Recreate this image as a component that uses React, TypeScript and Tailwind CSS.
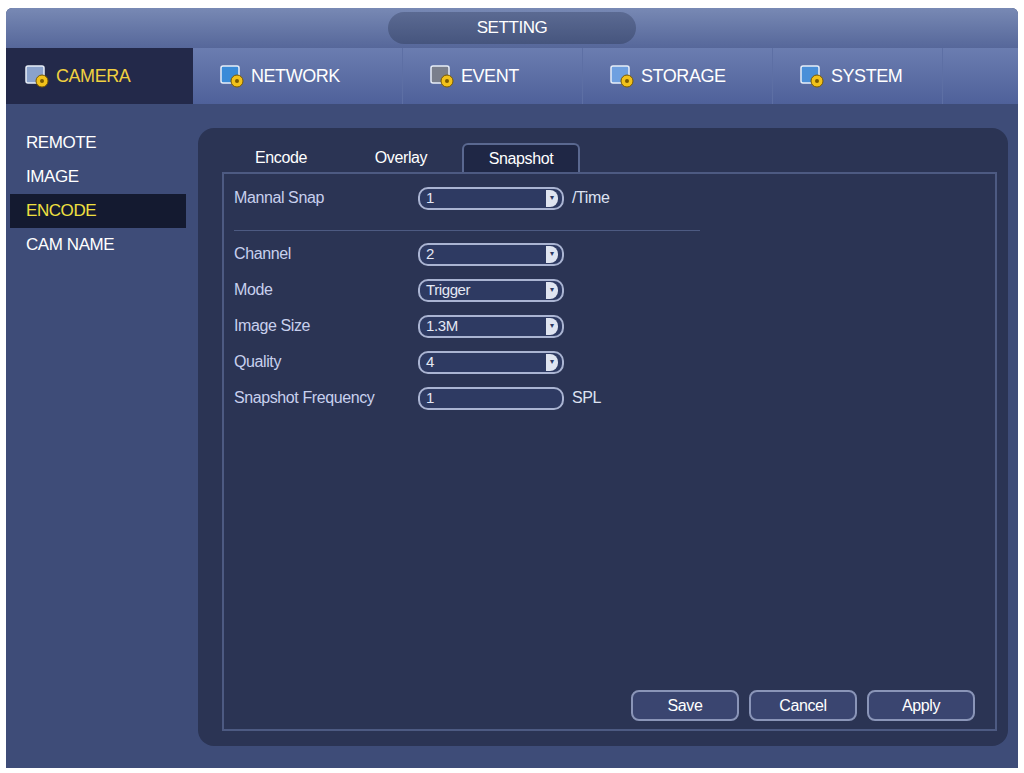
const font = { fontFamily: '"Liberation Sans", Arial, sans-serif' };

function TabIcon({ color }: { color: string }) {
  return (
    <svg width="30" height="26" viewBox="0 0 30 26">
      <rect x="4" y="3" width="18" height="17" rx="2" fill={color} stroke="#e8eef8" strokeWidth="1.5" />
      <circle cx="20" cy="18" r="6" fill="#f2c21b" stroke="#7a5a00" strokeWidth="1" />
      <circle cx="20" cy="18" r="2" fill="#7a5a00" />
    </svg>
  );
}

function Select({ value, arrow = true }: { value: string; arrow?: boolean }) {
  return (
    <div className="flex h-[23px] w-[146px] items-center justify-between rounded-[10px] border-2 border-[#aab4d2] bg-[#2e3a62] pl-1.5 pr-1 text-[15px] text-[#e4e8f4]">
      <span>{value}</span>
      {arrow ? (
        <span className="flex h-[17px] w-[12px] items-center justify-center rounded-r-[8px] bg-[#dfe4f0] text-[8px] text-[#2e3a62]">▾</span>
      ) : null}
    </div>
  );
}

const rows = [
  { label: "Channel", value: "2" },
  { label: "Mode", value: "Trigger" },
  { label: "Image Size", value: "1.3M" },
  { label: "Quality", value: "4" },
];

export default function App() {
  return (
    <div className="h-[773px] w-[1024px] bg-white px-[6px] pt-[8px]" style={font}>
      <div className="flex h-[760px] flex-col overflow-hidden rounded-t-md bg-[#3e4c78]">
        <div className="flex h-[40px] items-center justify-center bg-gradient-to-b from-[#7889b4] to-[#56679a]">
          <div className="flex h-[32px] w-[248px] items-center justify-center rounded-full bg-gradient-to-b from-[#5b6a92] to-[#46557e] text-[17px] tracking-tight text-white">SETTING</div>
        </div>
        <div className="flex h-[56px] bg-gradient-to-b from-[#6b7db0] to-[#4f619a]">
          <div className="flex w-[187px] items-center gap-1 bg-[#23294a] pl-4 text-[18px] tracking-tight text-[#f0d040]">
            <TabIcon color="#8aa2cc" />CAMERA
          </div>
          {[
            ["NETWORK", "#3a8bd8", 210],
            ["EVENT", "#7a7f8c", 180],
            ["STORAGE", "#6fa0e0", 190],
            ["SYSTEM", "#4a8fd8", 170],
          ].map(([t, c, w]) => (
            <div key={t as string} className="flex items-center gap-1 border-r border-[#5d6fa4] pl-6 text-[18px] tracking-tight text-white" style={{ width: w as number }}>
              <TabIcon color={c as string} />{t}
            </div>
          ))}
        </div>
        <div className="flex flex-1">
          <div className="w-[187px] pt-[22px] text-[17px] tracking-tight text-white">
            <div className="h-[34px] pl-5 leading-[34px]">REMOTE</div>
            <div className="h-[34px] pl-5 leading-[34px]">IMAGE</div>
            <div className="ml-[4px] h-[34px] w-[176px] bg-[#141a30] pl-4 leading-[34px] text-[#f0e040]">ENCODE</div>
            <div className="h-[34px] pl-5 leading-[34px]">CAM NAME</div>
          </div>
          <div className="mb-[22px] ml-[5px] mr-[10px] mt-[24px] flex flex-1 flex-col rounded-2xl bg-[#2b3454] pb-[15px] pl-[24px] pr-[11px] pt-[15px]">
            <div className="flex h-[29px] items-end text-[16px] tracking-tight text-white">
              <div className="flex h-full w-[118px] items-center justify-center">Encode</div>
              <div className="flex h-full w-[122px] items-center justify-center">Overlay</div>
              <div className="flex h-full w-[118px] items-center justify-center rounded-t-md border-x-2 border-t-2 border-[#5a6890] bg-[#1f2745]">Snapshot</div>
            </div>
            <div className="flex flex-1 flex-col border-2 border-[#4d5a82] px-[10px] pt-[12px] text-[16px] tracking-tight text-[#c8d0ee]">
              <div className="flex items-center">
                <span className="w-[184px]">Mannal Snap</span>
                <Select value="1" />
                <span className="ml-2 text-[#dde2f2]">/Time</span>
              </div>
              <div className="mt-[20px] h-px w-[466px] bg-[#4d5a82]" />
              <div className="mt-[11px] flex flex-col gap-[12px]">
                {rows.map((r) => (
                  <div key={r.label} className="flex items-center">
                    <span className="w-[184px]">{r.label}</span>
                    <Select value={r.value} />
                  </div>
                ))}
                <div className="flex items-center">
                  <span className="w-[184px]">Snapshot Frequency</span>
                  <Select value="1" arrow={false} />
                  <span className="ml-2 text-[#dde2f2]">SPL</span>
                </div>
              </div>
              <div className="mb-[8px] mt-auto flex justify-end gap-[10px] pr-[10px] text-[16px] text-white">
                {["Save", "Cancel", "Apply"].map((b) => (
                  <div key={b} className="flex h-[31px] w-[108px] items-center justify-center rounded-lg border-2 border-[#8a95b8] bg-[#3a4570]">{b}</div>
                ))}
              </div>
            </div>
          </div>
        </div>
      </div>
    </div>
  );
}
